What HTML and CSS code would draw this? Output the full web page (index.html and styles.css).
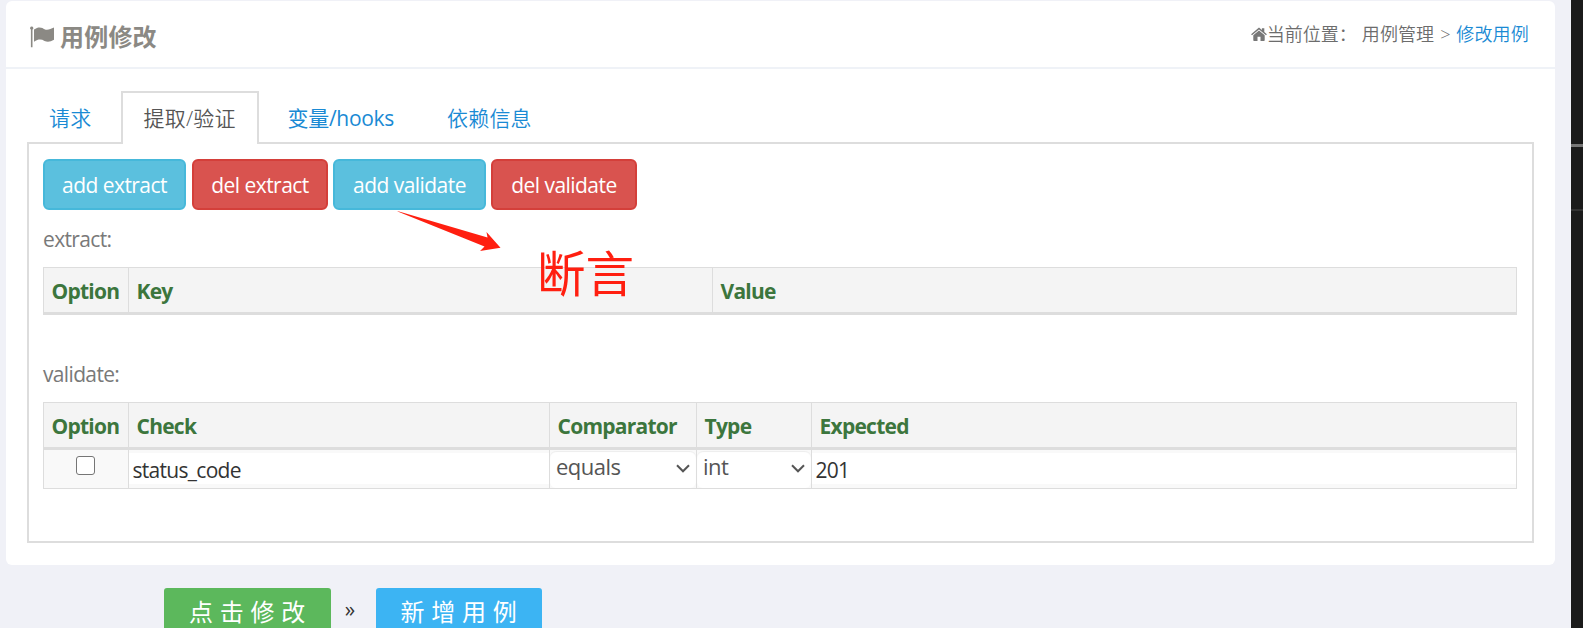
FILE: index.html
```html
<!DOCTYPE html>
<html lang="zh-CN">
<head>
<meta charset="utf-8">
<title>用例修改</title>
<link rel="stylesheet" href="styles.css">
</head>
<body>
<div class="page">
  <main class="content">
    <section class="card">
      <header class="card-head">
        <h1 class="title">
          <svg class="flag" width="24" height="22" viewBox="0 0 24 22"><path d="M1.7 0.5a1.6 1.6 0 0 1 .8 3V21.200H.9V3.500a1.600 1.600 0 0 1 .8-3z"/><path d="M4 3.600C9-.2 12.500 2 14.500 3.200c3 1.400 6-.2 9.500-1.600v12.200c-3.500 2-6.500 2.500-9.500 1.100-3-1.600-6-2.100-10.500.8z"/></svg>
          <span>用例修改</span>
        </h1>
        <nav class="crumbs">
          <svg class="home" width="16" height="15" viewBox="0 0 16 15"><path d="M8 3.400l5.700 4.800v5a.8.8 0 0 1-.8.800H9.500V9.800h-3V14H3.100a.8.8 0 0 1-.8-.8v-5z"/><path d="M8 .6l2.900 2.500V1.200h2.400v3.900L15.900 7.300l-.9 1L8 2.500 1 8.300l-.9-1z"/></svg>
          <span class="here">当前位置：</span>
          <span class="parent">用例管理</span>
          <span class="sep">&gt;</span>
          <a class="current">修改用例</a>
        </nav>
      </header>
      <div class="tabs">
        <a class="tab t1">请求</a>
        <a class="tab active">提取/验证</a>
        <a class="tab t3">变量/hooks</a>
        <a class="tab t4">依赖信息</a>
      </div>
      <div class="panel">
        <div class="buttons">
          <button class="btn info b1">add extract</button>
          <button class="btn danger b2">del extract</button>
          <button class="btn info b3">add validate</button>
          <button class="btn danger b4">del validate</button>
        </div>
        <div class="label">extract:</div>
        <div class="grid extract">
          <div class="th">Option</div><div class="th">Key</div><div class="th">Value</div>
        </div>
        <div class="label second">validate:</div>
        <div class="grid validate">
          <div class="th">Option</div><div class="th">Check</div><div class="th">Comparator</div><div class="th">Type</div><div class="th">Expected</div>
          <div class="td center"><span class="check"></span></div>
          <div class="td"><div class="field">status_code</div></div>
          <div class="td"><div class="select"><span>equals</span><svg width="14" height="9" viewBox="0 0 14 9"><path d="M1 1.300l6 6 6-6"/></svg></div></div>
          <div class="td"><div class="select"><span>int</span><svg width="14" height="9" viewBox="0 0 14 9"><path d="M1 1.300l6 6 6-6"/></svg></div></div>
          <div class="td"><div class="field">201</div></div>
        </div>
      </div>
    </section>
    <div class="actions">
      <button class="act green">点击修改</button>
      <span class="raquo">»</span>
      <button class="act blue">新增用例</button>
    </div>
  </main>
  <aside class="edge"><i class="line1"></i><i class="line2"></i></aside>
  <svg class="arrow" width="106" height="42" viewBox="0 0 106 42"><path d="M0 .3L2 .5 90.500 26.500 89.500 21 103.500 36.700 83 40 87.500 35.600Z"/></svg>
  <div class="note">断言</div>
</div>
</body>
</html>
```
FILE: styles.css
```css
* { box-sizing: border-box; }
body {
  margin: 0;
  font-family: "Open Sans", "Noto Sans CJK SC", sans-serif;
  font-size: 21px;
  color: #797979;
  background: #f0f1f7;
}
.page { position: relative; display: flex; width: 1583px; height: 628px; overflow: hidden; }
.content { flex: 1; padding: 1px 16px 0 6px; }
.card { height: 564px; background: #fff; border-radius: 6px; }
.card-head {
  display: flex;
  justify-content: space-between;
  height: 68px;
  padding: 0 26px 0 24px;
  border-bottom: 2px solid #eff2f7;
}
.title { display: flex; gap: 6px; margin: 0; font-size: 24px; line-height: 71px; letter-spacing: 0.2px; color: #8b8984; white-space: nowrap; }
.flag { margin-top: 25px; fill: #8b8984; }
.crumbs { display: flex; font-size: 18px; line-height: 67px; font-weight: 350; color: #6c6c6c; white-space: nowrap; }
.home { margin-top: 26px; fill: #777; }
.here { width: 95px; }
.parent { letter-spacing: 0.1px; }
.sep { width: 16px; margin-left: 6px; }
.current { color: #1a8ad4; letter-spacing: 0.2px; }
.tabs { display: flex; position: relative; z-index: 1; height: 53px; margin: 22px 0 -2px 21px; }
.tab { height: 53px; line-height: 55px; font-weight: 350; letter-spacing: 0.2px; color: #1a8ad4; white-space: nowrap; }
.t1 { width: 94px; padding-left: 22px; }
.active {
  width: 138px;
  padding-left: 20.5px;
  line-height: 51px;
  color: #555;
  background: #fff;
  border: 2px solid #ddd;
  border-bottom: 0;
}
.t3 { width: 159px; padding-left: 28.5px; font-weight: 400; letter-spacing: -0.3px; }
.t4 { padding-left: 29px; }
.panel { height: 401px; margin: 0 21px; padding: 15px 14px; border: 2px solid #ddd; }
.buttons { display: flex; }
.btn {
  height: 51px;
  padding: 0;
  font: 21px/49px "Open Sans", sans-serif;
  letter-spacing: -0.55px;
  color: #fff;
  border: 2px solid;
  border-radius: 6px;
  white-space: nowrap;
}
.info { background: #5bc0de; border-color: #46b8da; }
.danger { background: #d9534f; border-color: #d43f3a; }
.b1 { width: 143px; margin-right: 6px; }
.b2 { width: 136px; margin-right: 5px; }
.b3 { width: 153px; margin-right: 5px; }
.b4 { width: 146px; }
.label { height: 57px; line-height: 59px; font-size: 21px; letter-spacing: -0.65px; }
.second { height: 57px; margin-top: 30px; }
.grid { display: grid; width: 1474px; border: 1px solid #ddd; }
.extract { grid-template-columns: 85px 584px 1fr; border-bottom: 0; }
.validate { grid-template-columns: 85px 421px 147px 115px 1fr; }
.th {
  height: 47px;
  padding-left: 7.5px;
  line-height: 47px;
  font-weight: 700;
  letter-spacing: -0.75px;
  color: #3c763d;
  background: #f4f4f4;
  border-right: 1px solid #ddd;
  border-bottom: 3px solid #ddd;
}
.td { height: 38px; background: #f9f9f9; border-right: 1px solid #ddd; }
.extract .th:last-child, .th:nth-child(5), .td:last-child { border-right: 0; }
.center { padding: 6px 0 0 32px; }
.check { display: block; width: 19px; height: 19px; background: #fff; border: 1px solid #767676; border-radius: 3px; }
.field { height: 31px; margin-top: 3px; padding-left: 3.5px; line-height: 35px; color: #333; background: #fff; letter-spacing: -0.7px; }
.select {
  display: flex;
  justify-content: space-between;
  height: 37px;
  margin-top: 1px;
  padding: 0 6px;
  line-height: 31px;
  font-size: 22px;
  letter-spacing: -0.5px;
  color: #555;
  background: #fff;
  border-radius: 6px;
  box-shadow: inset 0 1px 1px rgba(0, 0, 0, .075);
}
.select svg { margin-top: 13px; fill: none; stroke: #555; stroke-width: 2; }
.actions { display: flex; padding: 23px 0 0 158px; }
.act {
  height: 40px;
  padding: 5px 0 0 6px;
  font: 24px/35px "Noto Sans CJK SC", sans-serif;
  letter-spacing: 6.7px;
  color: #fff;
  border: 0;
  border-radius: 3px 3px 0 0;
}
.green { width: 167px; background: #5cb85c; }
.blue { width: 166px; background: #3cb4f3; }
.raquo { width: 45px; padding-right: 7px; text-align: center; line-height: 42px; color: #333; }
.edge { width: 12px; padding-top: 144px; background: #1b1b1b; }
.line1 { display: block; height: 3px; background: #777; }
.line2 { display: block; height: 2px; margin-top: 62px; background: #333; }
.arrow { position: absolute; left: 397px; top: 211px; fill: #ff1f10; }
.note {
  position: absolute;
  left: 537px;
  top: 236px;
  font: 48.500px/70px "Noto Sans CJK SC", sans-serif;
  color: #ff1f10;
}
```
